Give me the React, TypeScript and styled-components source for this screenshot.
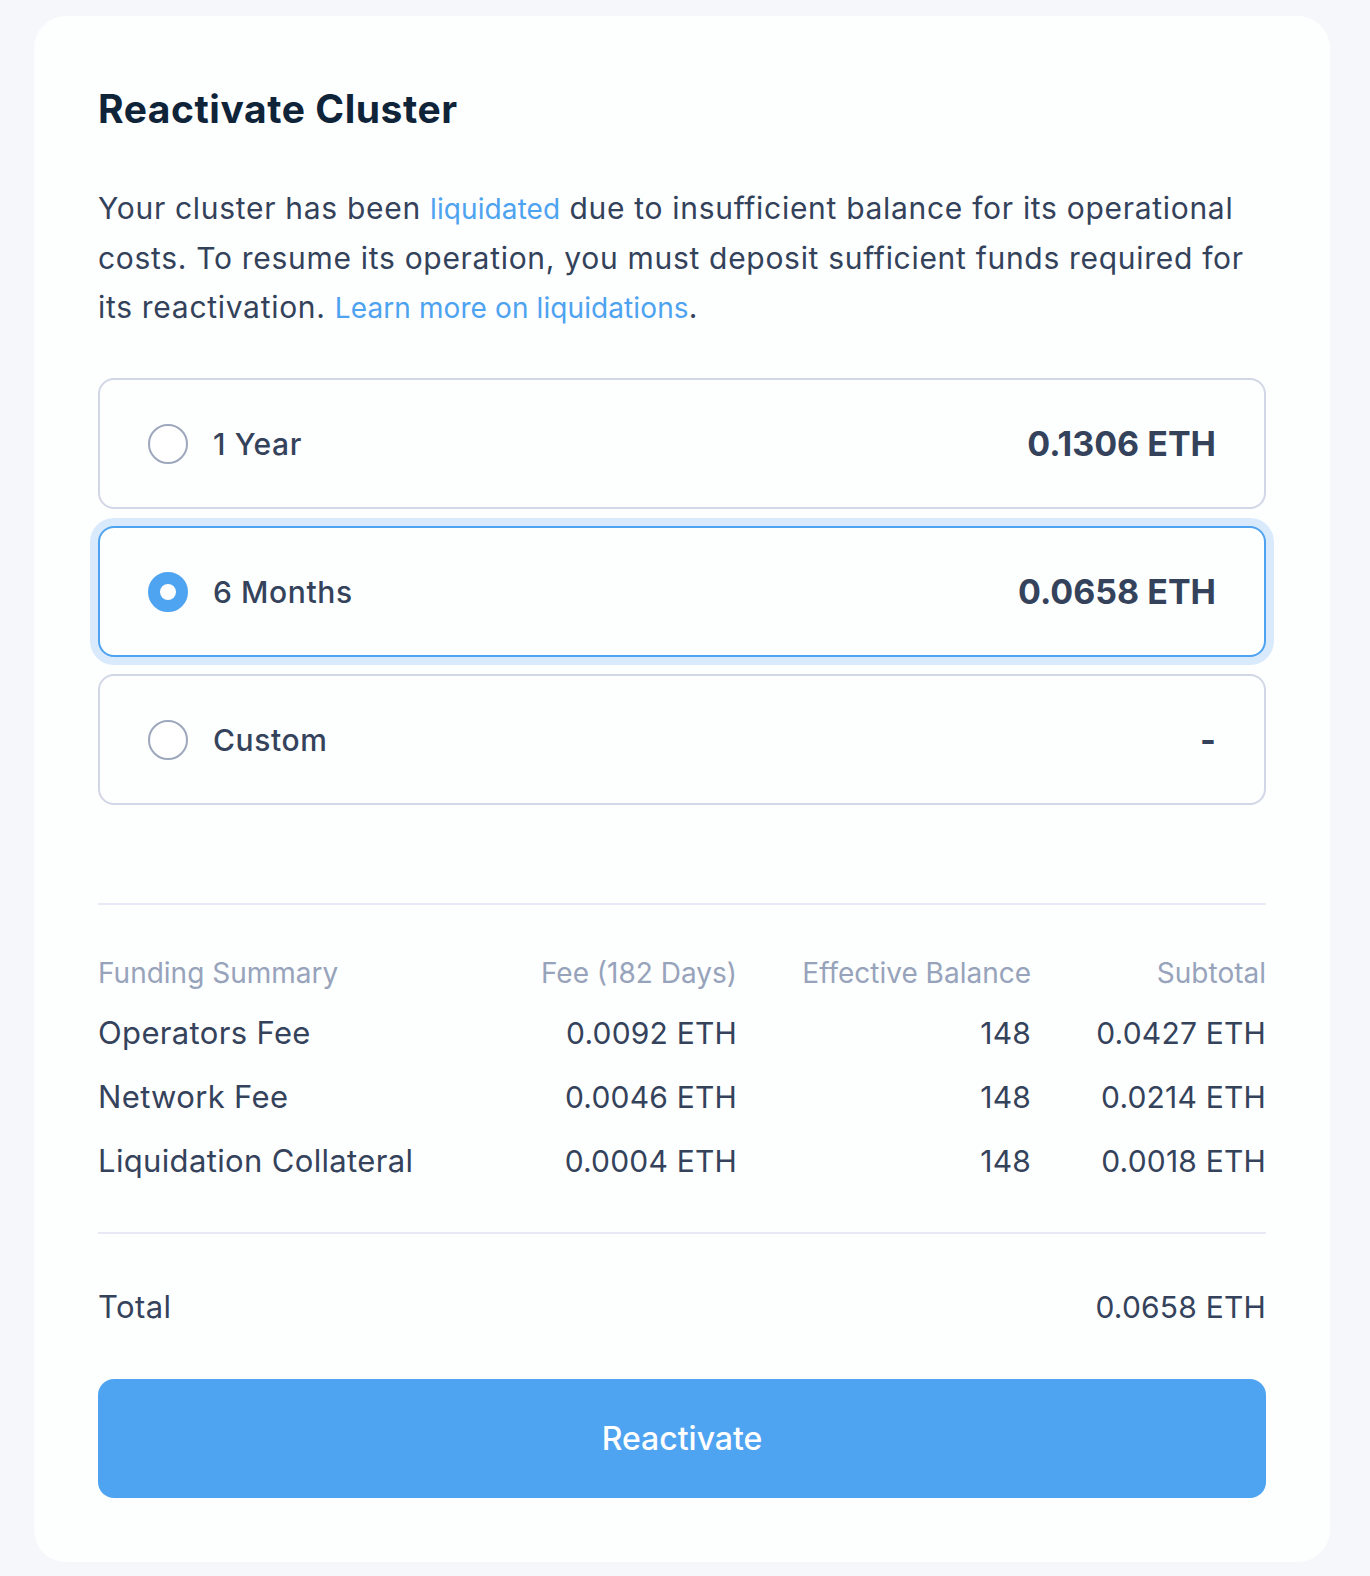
import React, { useState } from "react";
import styled, { createGlobalStyle, css } from "styled-components";

const GlobalStyle = createGlobalStyle`
  html, body {
    margin: 0;
    padding: 0;
    background: #f6f7fb;
  }
  body {
    font-family: Inter, "Noto Sans", "Liberation Sans", sans-serif;
    color: #34435b;
    -webkit-font-smoothing: antialiased;
  }
  * { box-sizing: border-box; }
`;

const Page = styled.div`
  padding: 16px 40px 14px 34px;
`;

const Card = styled.section`
  background: #fdfefe;
  border-radius: 32px;
  padding: 69px 64px 64px;
  display: flex;
  flex-direction: column;
`;

const Title = styled.h1`
  margin: 0;
  font-size: 39px;
  line-height: 48px;
  font-weight: 700;
  color: #0f2439;
  letter-spacing: 0.55px;
`;

const Intro = styled.p`
  margin: 51px 0 0;
  font-size: 30px;
  line-height: 49px;
  font-weight: 400;
  color: #33425a;
  letter-spacing: 0.7px;
`;

const Link = styled.a`
  color: #4da3f0;
  text-decoration: none;
  font-size: 28px;
  letter-spacing: 0.1px;
`;

const Options = styled.div`
  margin-top: 45px;
  display: flex;
  flex-direction: column;
  gap: 17px;
`;

const Option = styled.label<{ $selected: boolean }>`
  height: 131px;
  display: flex;
  align-items: center;
  padding: 0 48px;
  border-radius: 16px;
  border: 2px solid #d2d7e7;
  background: #fdfefe;
  cursor: pointer;
  ${(p) =>
    p.$selected &&
    css`
      border-color: #4ea3f1;
      box-shadow: 0 0 0 8px #d8eafc;
    `}
`;

const Radio = styled.span<{ $selected: boolean }>`
  width: 40px;
  height: 40px;
  border-radius: 50%;
  flex: none;
  border: 2px solid #9ea8bd;
  background: #fff;
  ${(p) =>
    p.$selected &&
    css`
      border: 12px solid #4fa4f2;
    `}
`;

const OptionLabel = styled.span`
  margin-left: 25px;
  flex: 1;
  font-size: 30px;
  font-weight: 500;
  color: #34435b;
  letter-spacing: 0.6px;
`;

const OptionPrice = styled.span`
  font-size: 34px;
  font-weight: 700;
  color: #34435b;
`;

const Divider = styled.hr<{ $top: number }>`
  margin: ${(p) => p.$top}px 0 0;
  border: none;
  height: 2px;
  background: #e7e9f6;
`;

const SummaryGrid = styled.div`
  margin-top: 52px;
  display: grid;
  grid-template-columns: 1fr 220px 294px 235px;
  row-gap: 24px;
`;

const HeadCell = styled.div<{ $right?: boolean }>`
  font-size: 28px;
  line-height: 32px;
  color: #97a3bb;
  text-align: ${(p) => (p.$right ? "right" : "left")};
  white-space: nowrap;
`;

const Cell = styled.div<{ $numeric?: boolean }>`
  font-size: ${(p) => (p.$numeric ? "30px" : "31px")};
  line-height: 40px;
  color: #34435b;
  text-align: ${(p) => (p.$numeric ? "right" : "left")};
  letter-spacing: ${(p) => (p.$numeric ? "0.2px" : "0.35px")};
  white-space: nowrap;
`;

const TotalRow = styled.div`
  margin-top: 53px;
  display: flex;
  justify-content: space-between;
  line-height: 40px;
  color: #34435b;
`;

const TotalLabel = styled.span`
  font-size: 31px;
  letter-spacing: 0.4px;
`;

const TotalValue = styled.span`
  font-size: 30px;
  letter-spacing: 0.2px;
`;

const Button = styled.button`
  margin-top: 52px;
  height: 119px;
  border: none;
  border-radius: 16px;
  background: #4fa4f1;
  color: #ffffff;
  font-family: inherit;
  font-size: 32px;
  font-weight: 500;
  cursor: pointer;
`;

const options = [
  { id: "year", label: "1 Year", price: "0.1306 ETH" },
  { id: "half", label: "6 Months", price: "0.0658 ETH" },
  { id: "custom", label: "Custom", price: "-" },
];

const rows = [
  { name: "Operators Fee", fee: "0.0092 ETH", balance: "148", subtotal: "0.0427 ETH" },
  { name: "Network Fee", fee: "0.0046 ETH", balance: "148", subtotal: "0.0214 ETH" },
  { name: "Liquidation Collateral", fee: "0.0004 ETH", balance: "148", subtotal: "0.0018 ETH" },
];

export default function App() {
  const [selected, setSelected] = useState("half");
  return (
    <>
      <GlobalStyle />
      <Page>
        <Card>
          <Title>Reactivate Cluster</Title>
          <Intro>
            Your cluster has been <Link href="#">liquidated</Link> due to insufficient balance for its
            operational costs. To resume its operation, you must deposit sufficient funds required for
            its reactivation. <Link href="#">Learn more on liquidations</Link>.
          </Intro>
          <Options>
            {options.map((o) => (
              <Option key={o.id} $selected={selected === o.id} onClick={() => setSelected(o.id)}>
                <Radio $selected={selected === o.id} />
                <OptionLabel>{o.label}</OptionLabel>
                <OptionPrice>{o.price}</OptionPrice>
              </Option>
            ))}
          </Options>
          <Divider $top={98} />
          <SummaryGrid>
            <HeadCell>Funding Summary</HeadCell>
            <HeadCell $right>Fee (182 Days)</HeadCell>
            <HeadCell $right>Effective Balance</HeadCell>
            <HeadCell $right>Subtotal</HeadCell>
            {rows.map((r) => (
              <React.Fragment key={r.name}>
                <Cell>{r.name}</Cell>
                <Cell $numeric>{r.fee}</Cell>
                <Cell $numeric>{r.balance}</Cell>
                <Cell $numeric>{r.subtotal}</Cell>
              </React.Fragment>
            ))}
          </SummaryGrid>
          <Divider $top={51} />
          <TotalRow>
            <TotalLabel>Total</TotalLabel>
            <TotalValue>0.0658 ETH</TotalValue>
          </TotalRow>
          <Button>Reactivate</Button>
        </Card>
      </Page>
    </>
  );
}
